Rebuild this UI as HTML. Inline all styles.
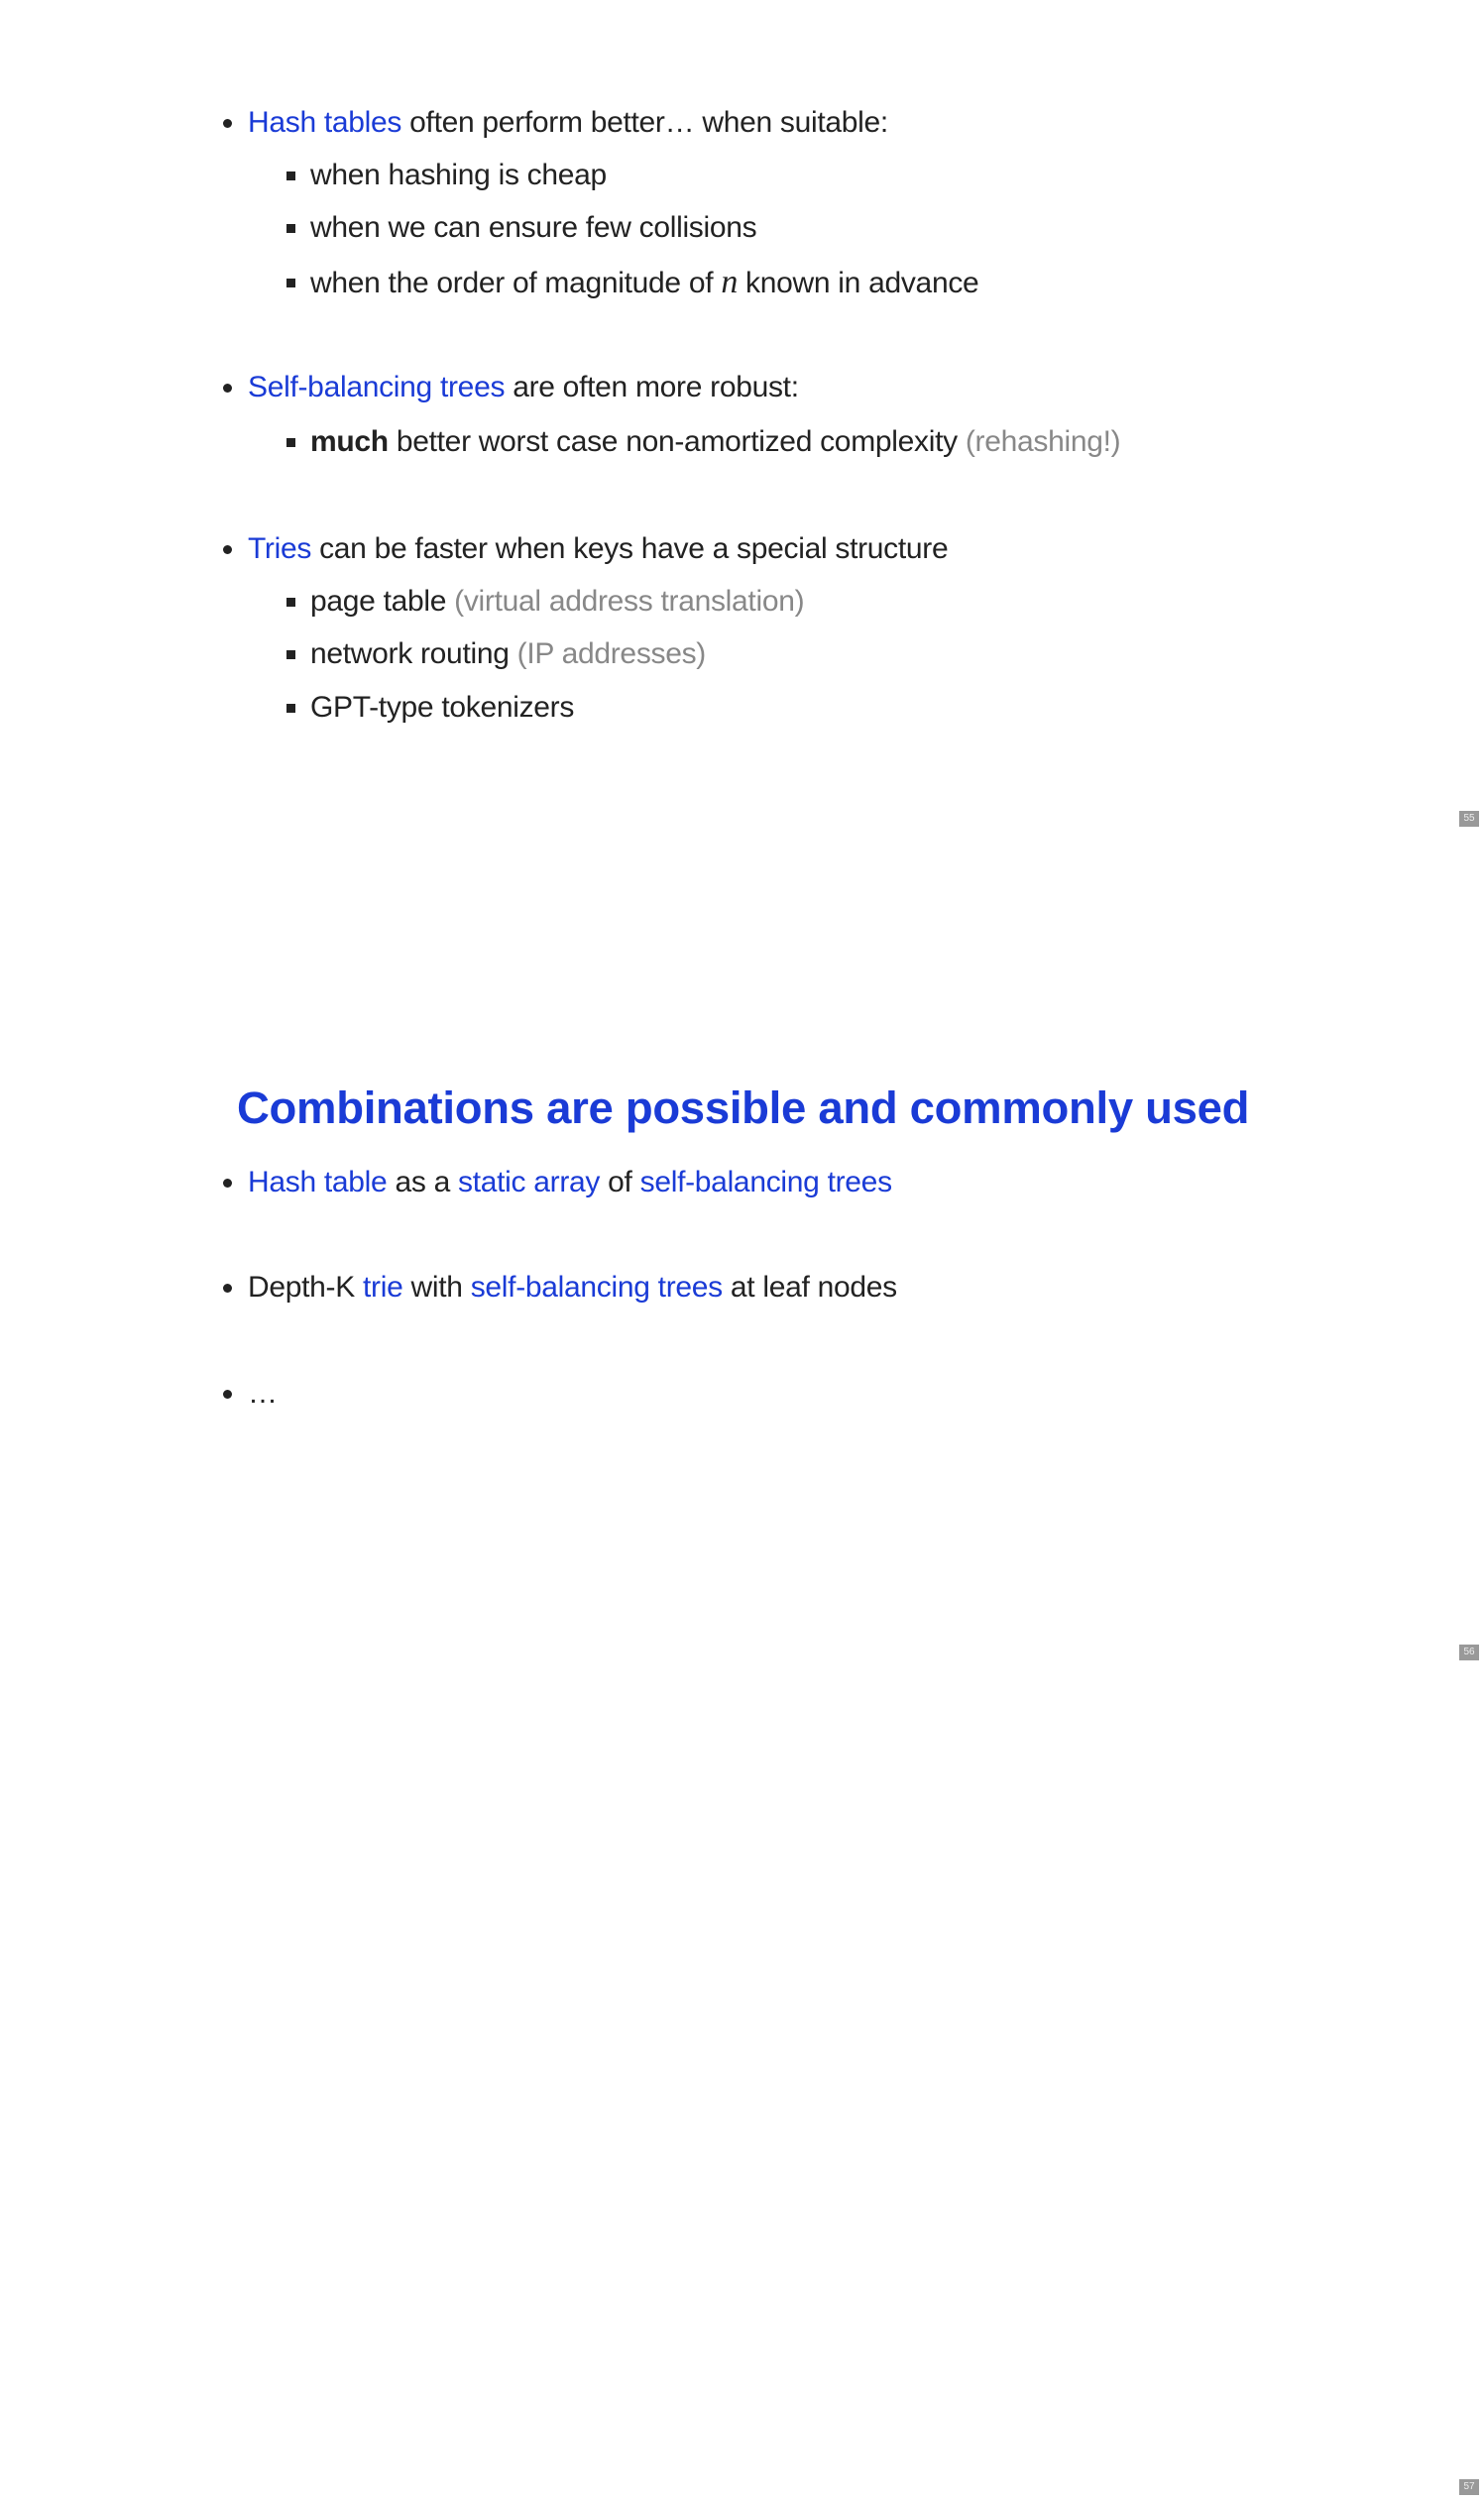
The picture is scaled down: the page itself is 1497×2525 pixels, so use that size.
<!DOCTYPE html>
<html><head><meta charset="utf-8"><style>
html,body{margin:0;padding:0;background:#fff;}
body{width:1497px;height:2525px;position:relative;overflow:hidden;font-family:"Liberation Sans",sans-serif;color:#222;}
.l{position:absolute;font-size:30px;line-height:40px;white-space:nowrap;letter-spacing:-0.3px;}
.b{color:#1a3bd6}
.g{color:#888}
.dot{position:absolute;width:9px;height:9px;border-radius:50%;background:#222;}
.sq{position:absolute;width:9px;height:9px;background:#222;}
.pn{position:absolute;left:1472px;width:20px;height:16px;background:#999;color:#eee;font-size:10px;line-height:16px;text-align:center;}
h1{position:absolute;margin:0;left:239px;top:1093px;font-size:45.5px;line-height:50px;color:#1a3bd6;font-weight:bold;white-space:nowrap;letter-spacing:-0.3px;}
i.m{font-family:"Liberation Serif",serif;font-size:34px;}
</style></head><body>

<div class="dot" style="left:225px;top:120px"></div>
<div class="l" style="left:250px;top:104px"><span class="b">Hash tables</span> often perform better… when suitable:</div>
<div class="sq" style="left:289px;top:173px"></div>
<div class="l" style="left:313px;top:157px">when hashing is cheap</div>
<div class="sq" style="left:289px;top:226px"></div>
<div class="l" style="left:313px;top:210px">when we can ensure few collisions</div>
<div class="sq" style="left:289px;top:281px"></div>
<div class="l" style="left:313px;top:265px">when the order of magnitude of <i class="m">n</i> known in advance</div>

<div class="dot" style="left:225px;top:387px"></div>
<div class="l" style="left:250px;top:371px"><span class="b">Self-balancing trees</span> are often more robust:</div>
<div class="sq" style="left:289px;top:442px"></div>
<div class="l" style="left:313px;top:426px"><b>much</b> better worst case non-amortized complexity <span class="g">(rehashing!)</span></div>

<div class="dot" style="left:225px;top:550px"></div>
<div class="l" style="left:250px;top:534px"><span class="b">Tries</span> can be faster when keys have a special structure</div>
<div class="sq" style="left:289px;top:603px"></div>
<div class="l" style="left:313px;top:587px">page table <span class="g">(virtual address translation)</span></div>
<div class="sq" style="left:289px;top:656px"></div>
<div class="l" style="left:313px;top:640px">network routing <span class="g">(IP addresses)</span></div>
<div class="sq" style="left:289px;top:710px"></div>
<div class="l" style="left:313px;top:694px">GPT-type tokenizers</div>

<div class="pn" style="top:818px">55</div>

<h1>Combinations are possible and commonly used</h1>

<div class="dot" style="left:225px;top:1189px"></div>
<div class="l" style="left:250px;top:1173px"><span class="b">Hash table</span> as a <span class="b">static array</span> of <span class="b">self-balancing trees</span></div>
<div class="dot" style="left:225px;top:1295px"></div>
<div class="l" style="left:250px;top:1279px">Depth-K <span class="b">trie</span> with <span class="b">self-balancing trees</span> at leaf nodes</div>
<div class="dot" style="left:225px;top:1402px"></div>
<div class="l" style="left:250px;top:1386px">…</div>

<div class="pn" style="top:1659px">56</div>
<div class="pn" style="top:2501px">57</div>
</body></html>
